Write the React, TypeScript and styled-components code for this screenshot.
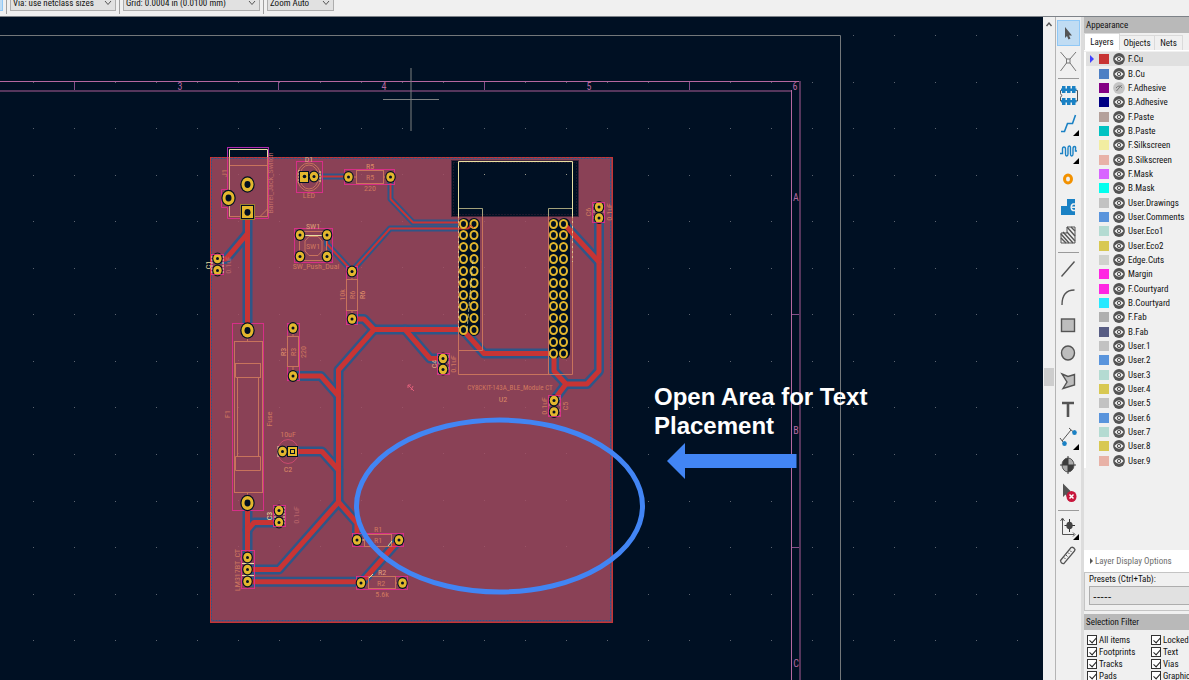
import React from "react";
import styled, { createGlobalStyle } from "styled-components";

const ui = `"Roboto Condensed", "Open Sans Condensed", "Noto Sans", "Liberation Sans", sans-serif`;

const GlobalStyle = createGlobalStyle`
  * { box-sizing: border-box; }
  body { margin: 0; background: #f0f0f0; font-family: ${ui}; font-size: 9px; line-height: 12px; color: #111; }
  button, select, input { font: inherit; color: inherit; margin: 0; }
`;

const Window = styled.div`
  display: flex;
  flex-direction: column;
  height: 100vh;
  overflow: hidden;
`;

const TopBar = styled.header`
  display: flex;
  align-items: flex-end;
  flex: none;
  height: 17px;
  padding-bottom: 5px;
  overflow: hidden;
  border-bottom: 1px solid #7d8288;
`;

const ActiveTool = styled.div`
  width: 3px;
  height: 20px;
  background: #c0dcf3;
  border: 1px solid #90c8f6;
  border-left: 0;
`;

const BarRule = styled.div`
  width: 1px;
  height: 24px;
  margin: 0 3px;
  margin-bottom: -3px;
  background: #a0a0a0;
`;

const Drop = styled.label<{ $w: number }>`
  display: grid;
  align-items: center;
  width: ${(p) => p.$w}px;
  height: 22px;
  > * { grid-area: 1 / 1; }
  > svg { justify-self: end; margin: 6px 4px 0 0; pointer-events: none; }
`;

const Select = styled.select`
  appearance: none;
  width: 100%;
  height: 100%;
  padding: 6px 12px 0 2px;
  border: 1px solid #adadad;
  border-radius: 0;
  background: #e1e1e1;
`;

const Workspace = styled.main`
  display: flex;
  flex: 1;
  min-height: 0;
`;

const Canvas = styled.section`
  flex: 1;
  min-width: 0;
  background: #001023;
  overflow: hidden;
  svg { display: block; width: 100%; height: 100%; }
`;

const ScrollTrack = styled.div`
  width: 13px;
  flex: none;
  background: #f0f0f0;
  border-right: 1px solid #b4b4b4;
  svg { display: block; margin: 3px 0 0 2px; }
`;

const ScrollThumb = styled.div`
  width: 10px;
  height: 18px;
  margin: 340px 0 0 1px;
  background: #cdcdcd;
`;

const Tools = styled.nav`
  display: flex;
  flex-direction: column;
  flex: none;
  width: 25px;
  padding-top: 2px;
`;

const Tool = styled.button<{ $on?: boolean }>`
  display: block;
  flex: none;
  width: 24px;
  height: 28px;
  padding: 1px;
  border: 0;
  background: ${(p) => (p.$on ? "#c0dcf3" : "transparent")};
  background-clip: content-box;
  svg { display: block; margin: -1px; }
`;

const ToolRule = styled.hr`
  flex: none;
  width: 21px;
  height: 1px;
  margin: 3px 2px 2px;
  border: 0;
  background: #9a9a9a;
`;

const Side = styled.aside`
  flex: none;
  width: 108px;
  border-left: 3px solid #dcdcdc;
  display: flex;
  flex-direction: column;
  overflow: hidden;
  white-space: nowrap;
`;

const PaneTitle = styled.h2`
  flex: none;
  margin: 0;
  height: 16px;
  padding: 0 2px;
  background: #b9b9b9;
  font-size: 9px;
  font-weight: 400;
  line-height: 16px;
`;

const Tabs = styled.div`
  display: flex;
  align-items: flex-end;
  flex: none;
  height: 18px;
  border-bottom: 1px solid #fff;
`;

const Tab = styled.button<{ $w: number; $on?: boolean }>`
  width: ${(p) => p.$w}px;
  height: ${(p) => (p.$on ? 17 : 15)}px;
  padding: 0;
  border: 1px solid #dadada;
  border-bottom: 0;
  border-left-width: ${(p) => (p.$on ? 1 : 0)}px;
  background: ${(p) => (p.$on ? "#fff" : "#f0f0f0")};
`;

const Layers = styled.ul`
  display: grid;
  grid-auto-rows: 1fr;
  flex: none;
  height: 416px;
  margin: 1px 0 0;
  padding: 0;
  list-style: none;
  border-left: 2px solid #fff;
`;

const LayerRow = styled.li<{ $on?: boolean }>`
  display: grid;
  grid-template-columns: 6px 11px 12px 1fr;
  column-gap: 3px;
  padding-left: 4px;
  align-items: center;
  min-height: 0;
  background: ${(p) => (p.$on ? "#e0e0e0" : "transparent")};
`;

const Swatch = styled.span<{ $c: string }>`
  width: 10px;
  height: 10px;
  background: ${(p) => p.$c};
`;

const Eye = styled.button`
  width: 12px;
  height: 12px;
  padding: 0;
  border: 0;
  background: none;
  svg { display: block; }
`;

const DisplayOptions = styled.button`
  flex: none;
  display: flex;
  align-items: center;
  gap: 2px;
  height: 22px;
  margin-top: 82px;
  padding: 0 6px;
  border: 0;
  background: #fff;
  color: #6d6d6d;
  text-align: left;
`;

const Presets = styled.div`
  flex: none;
  display: flex;
  flex-direction: column;
  gap: 1px;
  height: 39px;
  margin-bottom: 3px;
  padding: 0 0 0 4px;
  border: 1px solid #c4c4c4;
  border-width: 1px 0 1px 1px;
`;

const PresetSelect = styled.select`
  appearance: none;
  height: 19px;
  padding: 0 3px;
  border: 1px solid #adadad;
  border-right: 0;
  border-radius: 0;
  background: #e1e1e1;
  font-family: "Liberation Sans", sans-serif;
  font-size: 11px;
`;

const Filters = styled.div`
  display: grid;
  grid-template-columns: 64px 64px;
  grid-auto-rows: 12px;
  padding: 4px 0 0 3px;
`;

const Check = styled.label`
  display: flex;
  align-items: center;
  gap: 2px;
`;

const Box = styled.input`
  appearance: none;
  width: 10px;
  height: 10px;
  flex: none;
  border: 1px solid #333;
  background: #fff;
  &:checked::after {
    content: "";
    display: block;
    width: 3px;
    height: 6px;
    margin: 0 3px;
    border: solid #222;
    border-width: 0 1px 1px 0;
    transform: rotate(42deg);
  }
`;

const Chevron = () => (
  <svg width="8" height="6" viewBox="0 0 8 6" fill="none" stroke="#555">
    <path d="M1 1l3 3.5L7 1" />
  </svg>
);

/* ---------- board drawing ---------- */

const RED = "#c83434";
const BLUE = "#2f5688";
const GOLD = "#e3b72e";
const DARK = "#001023";
const FAB = "#c8735c";
const TEXT = "#d0785f";
const COURT = "#d62f88";
const SILK = "#e8dfa0";

const wide = [
  "M247.5 212V330", "M217 259H226L247 234", "M247.5 503V557", "M279 522.5H254L247.5 530",
  "M247.5 569.5H279L338.5 502V370L374 329.5L364 319H352", "M374 329.5H463",
  "M338.5 502L357 523V540", "M293 376H321L338.5 396", "M292 451.5H322L338.5 470",
  "M405 329.5L430 358.5H443", "M463 330L484 353.5H554",
  "M554 353.5V371L566 384H587L599 371V218", "M566 384L554 400", "M564 224L599 262",
  "M247.5 581.7H361", "M399 540L361 583",
];
const thin = [
  "M314 176.5H348", "M390.5 177V199L413 222.5H463", "M327 236V244L352 271L390 228.5H468L472 226",
];
const bigPads = [[247.5, 184.5], [228.5, 198], [247.5, 330.5], [247.5, 503]];
const pads = [
  [314, 176.5], [348.5, 177], [390.5, 177], [300, 235], [327, 235], [300, 256.5], [327, 256.5],
  [352, 271.5], [352, 319], [293, 328], [293, 376], [217.5, 258.5], [217.5, 270.5], [282.5, 451.5],
  [279, 510.5], [279, 522.5], [247.5, 557.5], [247.5, 569.5], [247.5, 581.5], [357, 540], [399, 540],
  [361, 583], [402.5, 583], [443, 358.5], [443, 369.5], [554, 400.5], [554, 412], [599, 207], [599, 218],
];
const rows = [224, 235, 247, 259, 271, 283, 295, 306, 318, 330, 342, 353.5];
const headerPads = rows.flatMap((y, i) =>
  [463.5, 474, 553.5, 563.5].filter((x) => i < 10 || x > 500).map((x) => [x, y])
);

/* text, x, y, rotated, colour, size */
const labels: [string, number, number, boolean?, string?, number?][] = [
  ["J1", 224, 173, true], ["Barrel_Jack_Switch", 270, 183, true, "#c06c68"],
  ["D1", 309, 159, false, "#e0a882"], ["LED", 309, 195], ["R5", 370, 166, false, "#dc8a66"], ["R5", 370, 177], ["220", 370, 188],
  ["SW1", 313, 226, false, "#e0a078"], ["SW1", 313, 246], ["SW_Push_Dual", 316, 266],
  ["10k", 342, 295, true], ["R6", 352, 295, true], ["R6", 362, 295, true, "#e0906a"],
  ["C1", 208, 265, true, SILK], ["0.1uF", 228, 265, true, "#b9656a"],
  ["R3", 283, 352, true, "#e0906a"], ["R3", 293, 352, true], ["220", 303, 352, true],
  ["F1", 227, 414, true], ["Fuse", 269, 419, true], ["10uF", 288, 434], ["C2", 288, 469, false, "#dc8a66"],
  ["C3", 269, 516, true, SILK], ["0.1uF", 296, 515, true, "#b9656a"], ["LM317BT_CT", 237, 570, true],
  ["R1", 378, 529], ["R1", 378, 540], ["R2", 382, 572, false, "#e0a080"], ["R2", 381, 583], ["5.6k", 382, 594],
  ["C4", 434, 364, true, "#e0a882"], ["0.1uF", 453, 364, true], ["CY8CKIT-143A_BLE_Module CT", 510, 387, false, TEXT, 7],
  ["U2", 503, 399, false, "#dc8a66"], ["0.1uF", 544, 406, true], ["C5", 565, 406, true], ["C6", 588, 212, true], ["0.1uF", 609, 212, true],
];

const range = (n: number) => Array.from({ length: n }, (_, i) => i);

const Board = () => (
  <svg>
    <g transform="translate(0 -17)" fill="none">
      <g fill="#5c6470">
        {range(14).map((j) => range(26).map((i) => (
          <rect key={`${i}-${j}`} x={Math.round(33 + i * 40.98)} y={Math.round(35 + j * 46.55)} width="1" height="1" />
        )))}
      </g>
      <path d="M0 35.5H840.5V680" stroke="#73777a" />
      <path d="M0 81.5H799" stroke="#b568a0" />
      <path d="M0 91H791" stroke="#55365c" strokeWidth="2" />
      <path d="M791.5 90V680" stroke="#b568a0" />
      <path d="M800 81V680" stroke="#55365c" strokeWidth="2" />
      <path d="M74.5 82V90M278.5 82V90M484.5 82V90M689.5 82V90M792 314.5H799M792 547.5H799" stroke="#85508a" />
      <g fill="#b568a0" fontFamily="Roboto Condensed, sans-serif" fontSize="10" textAnchor="middle">
        <text x="180" y="90">3</text><text x="384" y="90">4</text><text x="589" y="90">5</text><text x="795" y="90">6</text>
        <text x="796" y="201">A</text><text x="796" y="434">B</text><text x="796" y="667">C</text>
      </g>

      <rect x="210" y="157" width="403" height="466" fill="#8a4156" />
      <path d="M210.5 157V622.5H612.5V157" stroke={RED} />
      <path d="M210 157.5H613" stroke={RED} strokeDasharray="3 1" />
      <rect x="211.5" y="158.5" width="399" height="462" stroke={BLUE} strokeDasharray="2 1" />
      <g fill="#9a5266">
        {range(9).map((j) => range(9).map((i) => (
          <rect key={`${i}-${j}`} x={Math.round(238 + i * 40.98)} y={Math.round(174 + j * 46.55)} width="1" height="1" />
        )))}
      </g>
      <rect x="229" y="149" width="39" height="8" fill={DARK} />

      <rect x="452" y="161" width="126" height="55" fill={DARK} />
      <rect x="451.5" y="160.5" width="127" height="56" stroke={DARK} strokeDasharray="1 1" />
      <rect x="453.5" y="162.5" width="123" height="52" stroke="#3a2339" strokeDasharray="1 2" />
      <path d="M484 174.5h1M525 174.5h1M566 174.5h1" stroke="#9a9a8a" />

      <g stroke={BLUE} strokeLinejoin="round" strokeLinecap="round">
        <g strokeWidth="10">{wide.map((d) => <path key={d} d={d} />)}</g>
        <g strokeWidth="6">{thin.map((d) => <path key={d} d={d} />)}</g>
      </g>
      <g stroke={DARK} strokeWidth="12" strokeLinecap="round">
        <path d="M464 224V330M474 224V330M554 224V353M564 224V353" />
      </g>
      <g stroke={RED} strokeLinejoin="round" strokeLinecap="round">
        <g strokeWidth="5">{wide.map((d) => <path key={d} d={d} />)}</g>
        <g strokeWidth="2">{thin.map((d) => <path key={d} d={d} />)}</g>
      </g>

      {/* courtyards */}
      <g stroke={COURT}>
        <path d="M227.5 218.5V207.5H221.5V189.5H227.5V147.5H268.5V218.5Z" />
        <rect x="296.5" y="161.5" width="26" height="31" />
        <rect x="344.5" y="169.5" width="50" height="15" />
        <rect x="294.5" y="228.5" width="38" height="34" />
        <rect x="346.5" y="266.5" width="11" height="58" />
        <rect x="287.5" y="323.5" width="12" height="57" />
        <rect x="232.5" y="323.5" width="31" height="187" />
        <rect x="211.5" y="254.5" width="12" height="20" />
        <rect x="273.5" y="505.5" width="12" height="21" />
        <rect x="241.5" y="550.5" width="13" height="38" />
        <rect x="352.5" y="533.5" width="51" height="13" />
        <rect x="356.5" y="576.5" width="51" height="13" />
        <rect x="437.5" y="353.5" width="12" height="21" />
        <rect x="548.5" y="395.5" width="12" height="21" />
        <rect x="592.5" y="202.5" width="12" height="20" />
        <ellipse cx="288" cy="451.5" rx="10.5" ry="12" stroke="#c84a6e" />
      </g>
      <path d="M227.5 157V147.5H268.5V157" stroke="#b02ab0" />

      {/* fabrication outlines */}
      <g stroke={FAB}>
        <path d="M229.5 157V216.5H267.5V157M229.5 165.5H267.5M260 216.5L267.5 209" />
        <ellipse cx="309" cy="177" rx="9.5" ry="12" />
        <ellipse cx="309" cy="177" rx="12" ry="14" />
        <rect x="356.5" y="170.5" width="27" height="13" />
        <rect x="299.5" y="231.5" width="27" height="29" />
        <path d="M309 236.5H318L322 241V251L318 255.5H309L305 251V241Z" />
        <rect x="346.5" y="279.5" width="11" height="31" />
        <rect x="287.5" y="336.5" width="11" height="30" />
        <path d="M293 332V336M293 367V371M352 276V280M352 311V315M247.5 336V341M247.5 493V498" />
        <rect x="234.5" y="341.5" width="28" height="151" />
        <path d="M235.5 363.5H261M235.5 377.5H261M235.5 363V377M260.5 363V377M237.5 377V456M258.5 377V456M235.5 456.5H260.5V470.5H235.5Z" />
        <rect x="364.5" y="534.5" width="27" height="12" />
        <rect x="368.5" y="576.5" width="27" height="12" />
        <path d="M458.5 216V374.5H572.5V216M482.5 216V350.5H458.5M548.5 216V374" />
        <path d="M396 583H399M351 177H356M384 177H388" />
      </g>
      {/* silkscreen */}
      <g stroke={SILK}>
        <path d="M229.5 157V149.5H267.5V157" />
        <path d="M229.5 157V216.5" opacity=".5" />
        <path d="M458.5 216V161.5H572.5V216" />
        <path d="M458.5 208.5H482.5V216M572.5 208.5H548.5V216" opacity=".7" />
        <path d="M305 235.5H322" />
        <path d="M299 170V183M320 171V182M212 256V274M223 256V274M275 507V525M284 507V525" strokeDasharray="2 1" />
        <path d="M438 355V374M449 355V374M549 397V416M560 397V416M594 204V222M604 204V222" strokeDasharray="3 3" opacity=".7" />
        <path d="M458.5 216V331M572.5 216V262" strokeDasharray="2 3" opacity=".7" />
        <path d="M242 563.5H254M242 575.5H254M361 540H364M388 546L392 541M369 578L373 574M278 446V457" />
      </g>

      {/* pads */}
      {headerPads.map(([x, y]) => (
        <ellipse key={`${x}-${y}`} cx={x} cy={y} rx="3.5" ry="4" fill={DARK} stroke={GOLD} strokeWidth="2" />
      ))}
      <path d="M474 228L470 225L468 229" stroke={RED} />
      <path d="M473 260L467 330" stroke={SILK} strokeDasharray="4 2" opacity=".7" />
      {pads.map(([x, y]) => (
        <g key={`${x}-${y}`}>
          <ellipse cx={x} cy={y} rx="5.3" ry="6" fill={DARK} />
          <ellipse cx={x} cy={y} rx="4.2" ry="4.8" fill={GOLD} />
          <circle cx={x} cy={y} r="1.5" fill={DARK} />
        </g>
      ))}
      {bigPads.map(([x, y]) => (
        <g key={`${x}-${y}`}>
          <ellipse cx={x} cy={y} rx="7.2" ry="8.3" fill={DARK} />
          <ellipse cx={x} cy={y} rx="6" ry="7" fill={GOLD} />
          <ellipse cx={x} cy={y} rx="3" ry="3.4" fill={DARK} />
        </g>
      ))}
      <rect x="240.5" y="204.5" width="14" height="15" fill={DARK} stroke="#9a7d30" />
      <rect x="242" y="206" width="11" height="12" fill={GOLD} />
      <ellipse cx="247.5" cy="212.3" rx="3" ry="3.4" fill={DARK} />
      <rect x="299" y="171" width="10" height="12" fill={DARK} />
      <rect x="300" y="172" width="8" height="10" fill={GOLD} />
      <circle cx="304.5" cy="176.5" r="1.8" fill={DARK} />
      <rect x="287" y="446" width="11" height="11" fill={DARK} />
      <rect x="288" y="447" width="9" height="9" fill={GOLD} />
      <rect x="290.5" y="449.5" width="4" height="4" stroke={DARK} />
      <g stroke={COURT} opacity=".8">
        <path d="M211.5 254.5H223.500M211.500 274.5H223.500M273.500 505.500H285.500M273.500 526.500H285.500M437.500 353.500H449.500V374.500H437.500ZM548.500 395.500H560.500V416.500H548.500ZM592.500 202.500H604.500V222.500H592.500Z" />
      </g>

      <g fontFamily="Roboto Condensed, sans-serif" textAnchor="middle">
        {labels.map(([t, x, y, rot, c, s], i) => (
          <text key={i} fill={c || TEXT} fontSize={s || 8} transform={`translate(${x} ${y})${rot ? " rotate(-90)" : ""}`} y="3">{t}</text>
        ))}
      </g>

      <path d="M408 385L414 391M408 388V385H411M411 390L413 386" stroke="#e0607a" />
      <path d="M383 99.5H439M411 68V131" stroke="#7d8080" />

      {/* annotation */}
      <ellipse cx="499.5" cy="506" rx="143" ry="86" stroke="#4285f4" strokeWidth="5" />
      <path d="M667 461L685 443V454H796.5V468H685V479Z" fill="#4285f4" />
      <g fill="#fff" fontFamily="Liberation Sans, Arial, sans-serif" fontWeight="700" fontSize="24">
        <text x="654" y="405">Open Area for Text</text>
        <text x="654" y="434">Placement</text>
      </g>
    </g>
  </svg>
);

/* ---------- tool icons, drawn on a 24 x 28 field ---------- */

const G = "#545454";
const B = "#1a81c4";
const more = <path d="M23 21V27H17Z" fill="#000" />;

const tools: ([string, React.ReactNode] | null)[] = [
  ["Select", <g><rect x="1.5" y="1.5" width="22" height="25" fill="none" stroke="#90c8f6" /><path d="M9 8V19L11 17L12.5 20.5L14.5 19.5L13 16.5H16Z" fill={G} /></g>],
  ["Local ratsnest", <g stroke="#777" fill="none"><path d="M4.5 5L10.5 12M20 5L14 12M4.5 24L10.5 16M20 24L14 16" /><rect x="10.5" y="12" width="3.500" height="4" /></g>],
  null,
  ["Add footprint", <g><path d="M4.5 9.5V12.500Q7 14.500 4.500 16.500V20M20 9.500H21.500V20H20M4.500 9.500H6M4.500 20H6" stroke={G} fill="none" /><path d="M6 5H9.500V12H6ZM11 5H14.500V12H11ZM16 5H19.500V12H16ZM6 17H9.500V24H6ZM11 17H14.500V24H11ZM16 17H19.500V24H16Z" fill={B} /><path d="M5 7.500H20.500V10H5ZM5 19H20.500V21.500H5Z" fill={B} /></g>],
  ["Route tracks", <g><path d="M5 22.5H8.5L11.500 14.500H16.500L19.500 6" fill="none" stroke={B} strokeWidth="1.6" />{more}</g>],
  ["Tune length", <g><path d="M4 16.500H6.500V12Q6.500 10 8 10T9.500 12V17Q9.500 19 10.700 19T12 17V11Q12 9 13.300 9T14.500 11V17Q14.500 19 15.700 19T17 17V12Q17 9.500 18.500 9.500T19.500 12V14H21" fill="none" stroke={B} strokeWidth="1.4" />{more}</g>],
  ["Add via", <ellipse cx="12" cy="14" rx="3.5" ry="4" fill="none" stroke="#f29100" strokeWidth="3" />],
  ["Add zone", <g><path d="M11 6H19V22H5V13H11Z" fill={B} /><path d="M19 11H17A3 3.500 0 0 0 17 17.500H19M16 14.300H19" stroke="#f0f0f0" strokeWidth="1.5" fill="none" /></g>],
  ["Add rule area", <g stroke={G} fill="none" strokeWidth="1.4"><path d="M5 13L13 22M5 17L10 22M7 11L17 22M11 11L19 20M11 6L19 15M15 6L19 10" /><path d="M5 22V12H11V6H19V22Z" strokeWidth="1" /></g>],
  null,
  ["Draw line", <path d="M5.5 21.5L18.5 6.5" stroke={G} strokeWidth="1.4" />],
  ["Draw arc", <path d="M6 22Q6 7 18.5 7" stroke={G} strokeWidth="1.4" fill="none" />],
  ["Draw rectangle", <rect x="5.5" y="8" width="13" height="12.5" fill="#bdbdbd" stroke={G} strokeWidth="1.4" />],
  ["Draw circle", <ellipse cx="12" cy="14" rx="6.5" ry="7" fill="#bdbdbd" stroke={G} strokeWidth="1.4" />],
  ["Draw polygon", <path d="M6 7L12 9.5L18.5 7.5V18L7 21.5L11 15Z" fill="#bdbdbd" stroke={G} strokeWidth="1.4" />],
  ["Add text", <path d="M6 8H18M12 8V22" stroke={G} strokeWidth="2.6" />],
  ["Add dimension", <g><path d="M6 18L15 7M4 15L8.5 21M13 5L18 9.5" stroke={G} fill="none" /><ellipse cx="18.5" cy="9.500" rx="2.3" ry="2.5" fill={B} /><ellipse cx="8.5" cy="20.5" rx="2.3" ry="2.5" fill={B} />{more}</g>],
  ["Layer alignment target", <g><ellipse cx="12" cy="14" rx="6" ry="7" fill="#aaa" /><path d="M12 7A6 7 0 0 0 6 14H12ZM12 14H18A6 7 0 0 1 12 21Z" fill="#3c3c3c" /><ellipse cx="12" cy="14" rx="6" ry="7" fill="none" stroke={G} /><path d="M4 14H20M12 5V23" stroke="#3c3c3c" /></g>],
  ["Delete items", <g><path d="M7 4.500V18L9.5 15.5L12 19.5L14.500 12Z" fill={G} /><ellipse cx="15.5" cy="17.5" rx="5" ry="5.5" fill="#c8173c" /><path d="M13.5 15.5L17.5 19.5M17.5 15.5L13.5 19.5" stroke="#fff" strokeWidth="1.5" /></g>],
  null,
  ["Set origin", <g><path d="M6.5 6V21.5H18M4.5 8L6.5 5L8.5 8M17 19.5L19 21.5L17 23.5" stroke={G} fill="none" /><path d="M13.5 6V19M8.5 12.5H19" stroke="#333" /><ellipse cx="13.5" cy="12.5" rx="3.2" ry="3.800" fill="#444" />{more}</g>],
  ["Measure", <g stroke={G} fill="none"><path d="M4.500 19.500L15 6.5Q17.500 5.500 19 8.500L18.500 10L8 22.500Q5 23 4.500 19.500Z" strokeWidth="1.3" /><path d="M8 16.500L9.5 18M10 14L11.500 15.500M12 11.500L13.5 13M14 9.500L15.500 11" /></g>],
];

const layers: [string, string][] = [
  ["F.Cu", "#c83434"], ["B.Cu", "#4d7fc4"], ["F.Adhesive", "#840084"], ["B.Adhesive", "#000084"],
  ["F.Paste", "#b4a09a"], ["B.Paste", "#00c2c2"], ["F.Silkscreen", "#f2eda1"], ["B.Silkscreen", "#e8b2a7"],
  ["F.Mask", "#d864ff"], ["B.Mask", "#02ffee"], ["User.Drawings", "#c2c2c2"], ["User.Comments", "#5994dc"],
  ["User.Eco1", "#b4dbd2"], ["User.Eco2", "#d8c852"], ["Edge.Cuts", "#d0d2cd"], ["Margin", "#ff26e2"],
  ["F.Courtyard", "#ff26e2"], ["B.Courtyard", "#26e9ff"], ["F.Fab", "#afafaf"], ["B.Fab", "#585d84"],
  ["User.1", "#c2c2c2"], ["User.2", "#5994dc"], ["User.3", "#b4dbd2"], ["User.4", "#d8c852"],
  ["User.5", "#c2c2c2"], ["User.6", "#5994dc"], ["User.7", "#b4dbd2"], ["User.8", "#d8c852"], ["User.9", "#e8b2a7"],
];

const EyeIcon = ({ off }: { off: boolean }) => (
  <svg width="12" height="12" viewBox="0 0 12 12">
    <circle cx="6" cy="6" r="5.9" fill={off ? "#c4c4c4" : "#545454"} />
    {off ? (
      <path d="M3.5 9L8.5 3M3 6Q6 2 9 6" stroke="#777" fill="none" />
    ) : (
      <g>
        <path d="M1.5 6Q6 .5 10.5 6Q6 11.5 1.5 6Z" fill="#f4f4f4" />
        <circle cx="6" cy="6" r="1.7" fill="#ddd" stroke="#545454" />
      </g>
    )}
  </svg>
);

const filters = ["All items", "Locked items", "Footprints", "Text", "Tracks", "Vias", "Pads", "Graphics"];

export default function App() {
  return (
    <Window>
      <GlobalStyle />
      <TopBar>
        <ActiveTool />
        <BarRule />
        <Drop $w={106}>
          <Select aria-label="Via size"><option>Via: use netclass sizes</option></Select>
          <Chevron />
        </Drop>
        <BarRule />
        <Drop $w={137}>
          <Select aria-label="Grid"><option>Grid: 0.0004 in (0.0100 mm)</option></Select>
          <Chevron />
        </Drop>
        <BarRule />
        <Drop $w={67}>
          <Select aria-label="Zoom"><option>Zoom Auto</option></Select>
          <Chevron />
        </Drop>
      </TopBar>
      <Workspace>
        <Canvas aria-label="Board editor"><Board /></Canvas>
        <ScrollTrack>
          <svg width="8" height="8" viewBox="0 0 8 8" fill="none" stroke="#555" strokeWidth="1.4"><path d="M1.5 6L4 3L6.5 6" /></svg>
          <ScrollThumb />
        </ScrollTrack>
        <Tools aria-label="Drawing tools">
          {tools.map((t, i) =>
            t ? (
              <Tool key={t[0]} $on={i === 0} aria-label={t[0]}>
                <svg width="24" height="28" viewBox="0 0 24 28">{t[1]}</svg>
              </Tool>
            ) : (
              <ToolRule key={i} />
            )
          )}
        </Tools>
        <Side>
          <PaneTitle>Appearance</PaneTitle>
          <Tabs>
            <Tab $w={36} $on>Layers</Tab>
            <Tab $w={35}>Objects</Tab>
            <Tab $w={28}>Nets</Tab>
          </Tabs>
          <Layers>
            {layers.map(([name, color], i) => (
              <LayerRow key={name} $on={i === 0}>
                {i === 0 ? <svg width="4" height="8" viewBox="0 0 4 8"><path d="M0 0L4 4L0 8Z" fill="#4040ff" /></svg> : <span />}
                <Swatch $c={color} />
                <Eye aria-label={`Show ${name}`}><EyeIcon off={i === 2} /></Eye>
                <span>{name}</span>
              </LayerRow>
            ))}
          </Layers>
          <DisplayOptions>
            <svg width="3" height="6" viewBox="0 0 3 6"><path d="M0 0L3 3L0 6Z" fill="#555" /></svg>
            Layer Display Options
          </DisplayOptions>
          <Presets>
            <label htmlFor="presets">Presets (Ctrl+Tab):</label>
            <PresetSelect id="presets"><option>-----</option></PresetSelect>
          </Presets>
          <PaneTitle>Selection Filter</PaneTitle>
          <Filters>
            {filters.map((f) => (
              <Check key={f}><Box type="checkbox" defaultChecked />{f}</Check>
            ))}
          </Filters>
        </Side>
      </Workspace>
    </Window>
  );
}
